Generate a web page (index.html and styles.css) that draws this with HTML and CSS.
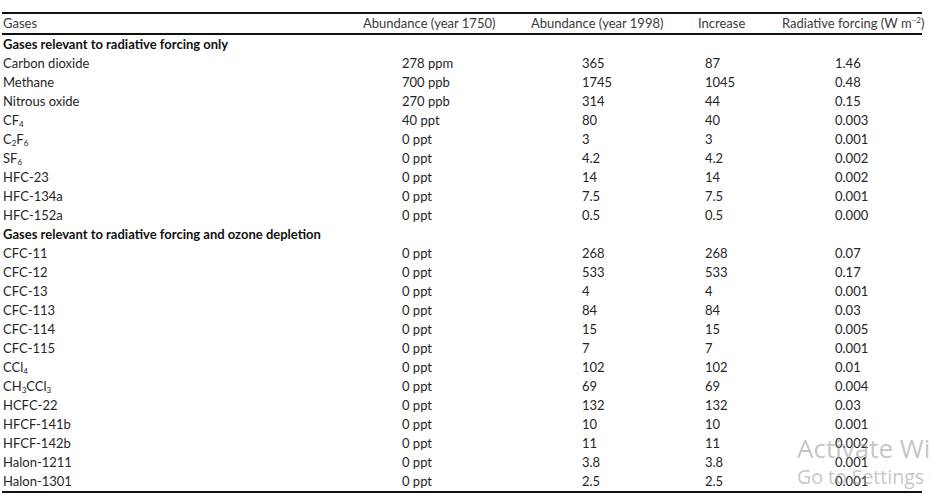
FILE: index.html
```html
<!DOCTYPE html>
<html>
<head>
<meta charset="utf-8">
<link rel="stylesheet" href="styles.css">
</head>
<body>
<div class="table">
  <div class="row head">
    <div class="c1">Gases</div>
    <div class="c2">Abundance (year 1750)</div>
    <div class="c3">Abundance (year 1998)</div>
    <div class="c4">Increase</div>
    <div class="c5">Radiative forcing (W m<sup>−2</sup>)</div>
  </div>
  <div class="body">
    <div class="row section"><div class="c1">Gases relevant to radiative forcing only</div></div>
    <div class="row"><div class="c1">Carbon dioxide</div><div class="c2">278 ppm</div><div class="c3">365</div><div class="c4">87</div><div class="c5">1.46</div></div>
    <div class="row"><div class="c1">Methane</div><div class="c2">700 ppb</div><div class="c3">1745</div><div class="c4">1045</div><div class="c5">0.48</div></div>
    <div class="row"><div class="c1">Nitrous oxide</div><div class="c2">270 ppb</div><div class="c3">314</div><div class="c4">44</div><div class="c5">0.15</div></div>
    <div class="row"><div class="c1">CF<sub>4</sub></div><div class="c2">40 ppt</div><div class="c3">80</div><div class="c4">40</div><div class="c5">0.003</div></div>
    <div class="row"><div class="c1">C<sub>2</sub>F<sub>6</sub></div><div class="c2">0 ppt</div><div class="c3">3</div><div class="c4">3</div><div class="c5">0.001</div></div>
    <div class="row"><div class="c1">SF<sub>6</sub></div><div class="c2">0 ppt</div><div class="c3">4.2</div><div class="c4">4.2</div><div class="c5">0.002</div></div>
    <div class="row"><div class="c1">HFC-23</div><div class="c2">0 ppt</div><div class="c3">14</div><div class="c4">14</div><div class="c5">0.002</div></div>
    <div class="row"><div class="c1">HFC-134a</div><div class="c2">0 ppt</div><div class="c3">7.5</div><div class="c4">7.5</div><div class="c5">0.001</div></div>
    <div class="row"><div class="c1">HFC-152a</div><div class="c2">0 ppt</div><div class="c3">0.5</div><div class="c4">0.5</div><div class="c5">0.000</div></div>
    <div class="row section"><div class="c1">Gases relevant to radiative forcing and ozone depletion</div></div>
    <div class="row"><div class="c1">CFC-11</div><div class="c2">0 ppt</div><div class="c3">268</div><div class="c4">268</div><div class="c5">0.07</div></div>
    <div class="row"><div class="c1">CFC-12</div><div class="c2">0 ppt</div><div class="c3">533</div><div class="c4">533</div><div class="c5">0.17</div></div>
    <div class="row"><div class="c1">CFC-13</div><div class="c2">0 ppt</div><div class="c3">4</div><div class="c4">4</div><div class="c5">0.001</div></div>
    <div class="row"><div class="c1">CFC-113</div><div class="c2">0 ppt</div><div class="c3">84</div><div class="c4">84</div><div class="c5">0.03</div></div>
    <div class="row"><div class="c1">CFC-114</div><div class="c2">0 ppt</div><div class="c3">15</div><div class="c4">15</div><div class="c5">0.005</div></div>
    <div class="row"><div class="c1">CFC-115</div><div class="c2">0 ppt</div><div class="c3">7</div><div class="c4">7</div><div class="c5">0.001</div></div>
    <div class="row"><div class="c1">CCl<sub>4</sub></div><div class="c2">0 ppt</div><div class="c3">102</div><div class="c4">102</div><div class="c5">0.01</div></div>
    <div class="row"><div class="c1">CH<sub>3</sub>CCl<sub>3</sub></div><div class="c2">0 ppt</div><div class="c3">69</div><div class="c4">69</div><div class="c5">0.004</div></div>
    <div class="row"><div class="c1">HCFC-22</div><div class="c2">0 ppt</div><div class="c3">132</div><div class="c4">132</div><div class="c5">0.03</div></div>
    <div class="row"><div class="c1">HFCF-141b</div><div class="c2">0 ppt</div><div class="c3">10</div><div class="c4">10</div><div class="c5">0.001</div></div>
    <div class="row"><div class="c1">HFCF-142b</div><div class="c2">0 ppt</div><div class="c3">11</div><div class="c4">11</div><div class="c5">0.002</div></div>
    <div class="row"><div class="c1">Halon-1211</div><div class="c2">0 ppt</div><div class="c3">3.8</div><div class="c4">3.8</div><div class="c5">0.001</div></div>
    <div class="row"><div class="c1">Halon-1301</div><div class="c2">0 ppt</div><div class="c3">2.5</div><div class="c4">2.5</div><div class="c5">0.001</div></div>
  </div>
</div>
<div class="watermark">
  <div class="wm-title">Activate Windows</div>
  <div class="wm-sub">Go to Settings to activate Windows.</div>
</div>
</body>
</html>
```

FILE: styles.css
```css
html, body {
  margin: 0;
  padding: 0;
  background: #ffffff;
  overflow: hidden;
}
body {
  width: 930px;
  height: 496px;
  position: relative;
  font-family: "Lato", "Open Sans", sans-serif;
  font-size: 13px;
  color: #262626;
}
.table {
  margin: 12px 0 0 2px;
  width: 920px;
  border-top: 2px solid #111;
  border-bottom: 2px solid #111;
}
.row {
  display: grid;
  grid-template-columns: 361px 168px 167px 84px 140px;
  height: 19px;
  align-items: center;
  line-height: 19px;
  white-space: nowrap;
}
.head {
  height: 19px;
  border-bottom: 2px solid #111;
  color: #3a3a3a;
}
.row .c1 { padding-left: 1px; }
.body .row .c2 { padding-left: 39px; }
.body .row .c3 { padding-left: 51px; }
.body .row .c4 { padding-left: 7px; }
.body .row .c5 { padding-left: 53px; }
.section { font-weight: 700; color: #111111; }
sub {
  font-size: 8px;
  vertical-align: -2px;
  line-height: 0;
}
sup {
  font-size: 8px;
  vertical-align: 5px;
  line-height: 0;
}
.watermark {
  position: absolute;
  left: 797px;
  right: 0;
  top: 431px;
  overflow: hidden;
  color: rgba(140, 140, 140, 0.5);
  font-family: "Open Sans", sans-serif;
  white-space: nowrap;
}
.wm-title {
  font-size: 26px;
  line-height: 34px;
}
.wm-sub {
  font-size: 19.5px;
  line-height: 24px;
}
```
